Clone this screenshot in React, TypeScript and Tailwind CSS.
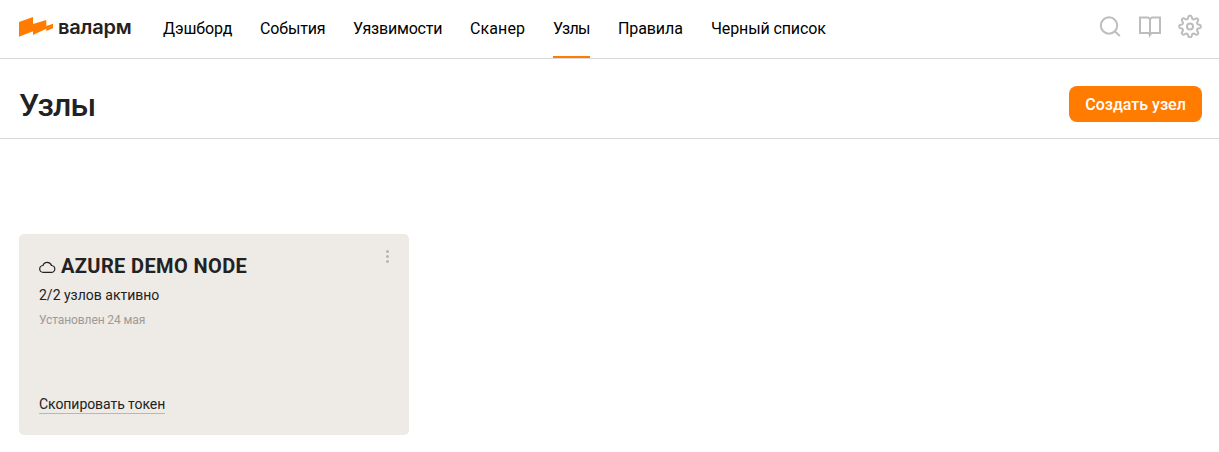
const nav = [
  { label: 'Дэшборд', box: 'w-[69px] tracking-[-0.1px]' },
  { label: 'События', box: 'w-[65px] tracking-[-0.15px]' },
  { label: 'Уязвимости', box: 'w-[89px] tracking-[-0.2px]' },
  { label: 'Сканер', box: 'w-[55px] tracking-[0.1px]' },
  { label: 'Узлы', box: 'w-[37px] tracking-[-0.7px]', active: true },
  { label: 'Правила', box: 'w-[65px] tracking-[-0.1px]' },
  { label: 'Черный список', box: 'w-[116px] tracking-[-0.12px]' },
];

function gearPath() {
  const pts: string[] = [];
  for (let i = 0; i <= 160; i++) {
    const t = (i / 160) * Math.PI * 2;
    const w = Math.tanh(1.6 * Math.cos(8 * t)) / Math.tanh(1.6);
    const r = 9.3 + 1.5 * w;
    pts.push(`${(12 + r * Math.sin(t)).toFixed(2)} ${(12.5 - r * Math.cos(t)).toFixed(2)}`);
  }
  return `M${pts.join('L')}Z`;
}

export default function App() {
  return (
    <div className="h-[452px] w-[1219px] overflow-hidden bg-white font-['Roboto','Noto_Sans',sans-serif] text-[#222]">
      <header className="flex h-[59px] items-start border-b border-[#d9d9d9] pl-[19px] pr-[17px]">
        <div className="flex h-[58px] w-[144px] shrink-0 items-start pt-[17px]">
          <svg width="34" height="20" viewBox="0 0 34 20" fill="#ff7c00">
            <path d="M0 5 14 0V7L27.3 3V9L34 6.8V11.3L27.3 14V11.8L14 18V14.2L0 19.8Z" />
          </svg>
          <span className="ml-[5px] mt-[-2px] font-['Inter',sans-serif] text-[20px] font-semibold leading-[24px] tracking-[-0.2px]">валарм</span>
        </div>
        <nav className="flex gap-7 text-[16px] text-black">
          {nav.map((n) => (
            <a key={n.label} className={`${n.box} h-[58px] whitespace-nowrap pt-[17px] leading-[24px] ${n.active ? 'border-b-2 border-[#ff7c00]' : ''}`}>
              {n.label}
            </a>
          ))}
        </nav>
        <div className="ml-auto flex gap-4 pt-[14px] text-[#bdbdbd]">
          <svg width="24" height="24" viewBox="0 0 24 24" fill="none" stroke="currentColor" strokeWidth="2">
            <circle cx="11" cy="11.5" r="8.2" /><path d="m17 17.5 4.8 4.5" />
          </svg>
          <svg width="24" height="24" viewBox="0 0 24 24" fill="none" stroke="currentColor" strokeWidth="2">
            <path d="M12 21 10.5 19H2V3.5H10L12 5L14 3.5H22V19H13.5L12 21V5" />
          </svg>
          <svg width="24" height="24" viewBox="0 0 24 24" fill="none" stroke="currentColor" strokeWidth="2">
            <path d={gearPath()} /><circle cx="12" cy="12.5" r="3" />
          </svg>
        </div>
      </header>
      <div className="flex h-[80px] items-start justify-between border-b border-[#d9d9d9] pl-[19px] pr-[17px]">
        <h1 className="mt-[26px] text-[32px] font-medium leading-[40px] tracking-[-0.9px]">Узлы</h1>
        <button className="mt-[27px] h-[36px] w-[133px] whitespace-nowrap rounded-lg bg-[#ff7c00] pt-[2px] text-[16px] font-medium text-white">Создать узел</button>
      </div>
      <main className="pl-[19px] pt-[95px]">
        <section className="flex h-[201px] w-[390px] flex-col items-start rounded-[5px] bg-[#eeeae5] px-5 pt-5">
          <div className="flex w-full items-start">
            <svg className="mt-[6px]" width="17" height="14" viewBox="0 0 17 14" fill="none" stroke="#222" strokeWidth="1.2">
              <path d="M4.2 12.3C2.2 12.3.7 10.8.7 8.9S2.1 5.7 4 5.5C4.5 3.6 6.1 2.4 8.2 2.4S11.9 3.6 12.5 5.5C14.4 5.7 15.8 7.1 15.8 8.9S14.3 12.3 12.4 12.3Z" />
            </svg>
            <h2 className="ml-[5px] text-[20px] font-bold leading-[24px] tracking-[0.38px]">AZURE DEMO NODE</h2>
            <svg className="ml-auto mr-[-1px] mt-[-6px]" width="5" height="16" fill="#b8b5b2"><circle cx="2.5" cy="3.5" r="1.5" /><circle cx="2.5" cy="8.5" r="1.5" /><circle cx="2.5" cy="13.5" r="1.5" /></svg>
          </div>
          <p className="mt-[7px] text-[14px] leading-[20px]">2/2 узлов активно</p>
          <p className="mt-[7px] text-[12px] leading-[16px] tracking-[-0.1px] text-[#9d9a98]">Установлен 24 мая</p>
          <a className="mt-[67px] h-[19px] border-b border-[#b9b6b3] text-[14px] leading-[19px] tracking-[-0.06px]">Скопировать токен</a>
        </section>
      </main>
    </div>
  );
}
